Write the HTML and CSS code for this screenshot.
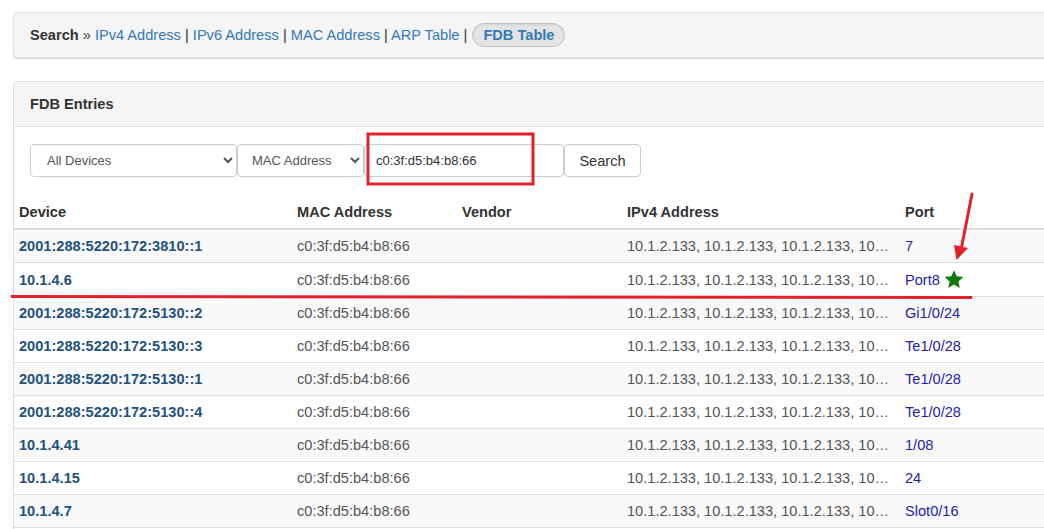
FILE: index.html
```html
<!DOCTYPE html>
<html>
<head>
<meta charset="utf-8">
<link rel="stylesheet" href="styles.css">
</head>
<body>
<div class="page">
  <div class="well">
    <b class="crumb-title">Search</b> &raquo; <a href="#">IPv4 Address</a> | <a href="#">IPv6 Address</a> | <a href="#">MAC Address</a> | <a href="#">ARP Table</a> | <a href="#" class="pill">FDB Table</a>
  </div>

  <div class="panel">
    <div class="panel-heading">FDB Entries</div>
    <div class="panel-body">
      <form class="search-form">
        <select class="ctl sel-device"><option>All Devices</option></select>
        <select class="ctl sel-type"><option>MAC Address</option></select>
        <input class="ctl inp" type="text" value="c0:3f:d5:b4:b8:66">
        <button type="button" class="btn">Search</button>
      </form>
    </div>
    <table class="fdb">
      <colgroup>
        <col class="c-dev"><col class="c-mac"><col class="c-ven"><col class="c-ip"><col class="c-port">
      </colgroup>
      <thead>
        <tr><th>Device</th><th>MAC Address</th><th>Vendor</th><th>IPv4 Address</th><th>Port</th></tr>
      </thead>
      <tbody>
        <tr><td><a class="dev" href="#">2001:288:5220:172:3810::1</a></td><td>c0:3f:d5:b4:b8:66</td><td></td><td class="ip">10.1.2.133, 10.1.2.133, 10.1.2.133, 10.1.2.133</td><td><a class="port" href="#">7</a></td></tr>
        <tr><td><a class="dev" href="#">10.1.4.6</a></td><td>c0:3f:d5:b4:b8:66</td><td></td><td class="ip">10.1.2.133, 10.1.2.133, 10.1.2.133, 10.1.2.133</td><td><a class="port" href="#">Port8</a> <svg class="star" width="20" height="20" viewBox="0 0 20 20"><path d="M10 1.2 L12.7 7.28 L19.32 7.97 L14.37 12.42 L15.76 18.93 L10 15.6 L4.24 18.93 L5.63 12.42 L0.68 7.97 L7.3 7.28 Z" fill="#0b7a0b"/></svg></td></tr>
        <tr><td><a class="dev" href="#">2001:288:5220:172:5130::2</a></td><td>c0:3f:d5:b4:b8:66</td><td></td><td class="ip">10.1.2.133, 10.1.2.133, 10.1.2.133, 10.1.2.133</td><td><a class="port" href="#">Gi1/0/24</a></td></tr>
        <tr><td><a class="dev" href="#">2001:288:5220:172:5130::3</a></td><td>c0:3f:d5:b4:b8:66</td><td></td><td class="ip">10.1.2.133, 10.1.2.133, 10.1.2.133, 10.1.2.133</td><td><a class="port" href="#">Te1/0/28</a></td></tr>
        <tr><td><a class="dev" href="#">2001:288:5220:172:5130::1</a></td><td>c0:3f:d5:b4:b8:66</td><td></td><td class="ip">10.1.2.133, 10.1.2.133, 10.1.2.133, 10.1.2.133</td><td><a class="port" href="#">Te1/0/28</a></td></tr>
        <tr><td><a class="dev" href="#">2001:288:5220:172:5130::4</a></td><td>c0:3f:d5:b4:b8:66</td><td></td><td class="ip">10.1.2.133, 10.1.2.133, 10.1.2.133, 10.1.2.133</td><td><a class="port" href="#">Te1/0/28</a></td></tr>
        <tr><td><a class="dev" href="#">10.1.4.41</a></td><td>c0:3f:d5:b4:b8:66</td><td></td><td class="ip">10.1.2.133, 10.1.2.133, 10.1.2.133, 10.1.2.133</td><td><a class="port" href="#">1/08</a></td></tr>
        <tr><td><a class="dev" href="#">10.1.4.15</a></td><td>c0:3f:d5:b4:b8:66</td><td></td><td class="ip">10.1.2.133, 10.1.2.133, 10.1.2.133, 10.1.2.133</td><td><a class="port" href="#">24</a></td></tr>
        <tr><td><a class="dev" href="#">10.1.4.7</a></td><td>c0:3f:d5:b4:b8:66</td><td></td><td class="ip">10.1.2.133, 10.1.2.133, 10.1.2.133, 10.1.2.133</td><td><a class="port" href="#">Slot0/16</a></td></tr>
        <tr class="more"><td></td><td></td><td></td><td></td><td></td></tr>
      </tbody>
    </table>
  </div>
</div>

<svg class="annot" width="1044" height="529" viewBox="0 0 1044 529">
  <rect x="368" y="134" width="165" height="50" fill="none" stroke="#e3212b" stroke-width="3"/>
  <line x1="12" y1="296.5" x2="971" y2="297.5" stroke="#e3212b" stroke-width="3" stroke-linecap="round"/>
  <line x1="972" y1="194" x2="961" y2="250" stroke="#e3212b" stroke-width="3" stroke-linecap="round"/>
  <polygon points="956.5,260 954,245 968,248" fill="#e3212b"/>
</svg>
</body>
</html>
```

FILE: styles.css
```css
html, body {
  margin: 0;
  padding: 0;
  overflow: hidden;
  background: #fff;
}

body {
  font-family: "Liberation Sans", Arial, sans-serif;
  font-size: 14.6px;
  color: #333;
  position: relative;
  width: 1044px;
  height: 529px;
}

a {
  color: #337ab7;
  text-decoration: none;
}

.page {
  padding: 12px 0 0 13px;
  width: 1110px;
}

.well {
  background: #f5f5f5;
  border: 1px solid #e3e3e3;
  border-radius: 4px;
  box-shadow: 0 1px 1px rgba(0, 0, 0, 0.06), 0 1px 0 #e3e3e3;
  padding: 10px 16px;
  height: 24px;
  line-height: 24px;
  white-space: nowrap;
}

.crumb-title {
  font-weight: bold;
  color: #333;
}

.pill {
  display: inline-block;
  vertical-align: top;
  font-weight: bold;
  background: #e4e4e4;
  border: 1px solid #c4c4c4;
  border-radius: 12px;
  height: 22px;
  line-height: 22px;
  padding: 0 10px;
  margin-left: 1px;
  box-shadow: inset 0 1px 2px rgba(0, 0, 0, 0.08);
}

.panel {
  margin-top: 23px;
  border: 1px solid #ddd;
  border-radius: 4px;
  background: #fff;
}

.panel-heading {
  background: #f5f5f5;
  border-bottom: 1px solid #ddd;
  height: 44px;
  line-height: 44px;
  padding: 0 16px;
  font-weight: bold;
  border-radius: 4px 4px 0 0;
}

.panel-body {
  padding: 17px 16px 0 16px;
}

.search-form {
  display: flex;
  height: 33px;
}

.ctl {
  box-sizing: border-box;
  height: 33px;
  border: 1px solid #ccc;
  border-radius: 4px;
  background: #fff;
  font-family: "Liberation Sans", Arial, sans-serif;
  font-size: 13px;
  color: #555;
  margin: 0;
}

.sel-device {
  width: 207px;
  padding: 0 8px 0 12px;
}

.sel-type {
  width: 127px;
  padding: 0 8px 0 10px;
}

.inp {
  width: 200px;
  padding: 0 11px;
  color: #333;
}

.btn {
  box-sizing: border-box;
  height: 33px;
  width: 77px;
  border: 1px solid #ccc;
  border-radius: 4px;
  background: #fff;
  font-family: "Liberation Sans", Arial, sans-serif;
  font-size: 14.6px;
  color: #333;
  padding: 0;
  margin: 0;
}

.fdb {
  margin-top: 19px;
  width: 100%;
  border-collapse: collapse;
  table-layout: fixed;
}

.c-dev { width: 278px; }
.c-mac { width: 165px; }
.c-ven { width: 165px; }
.c-ip { width: 278px; }

.fdb th {
  text-align: left;
  font-weight: bold;
  color: #333;
  padding: 6px 5px;
  line-height: 20px;
  border-bottom: 2px solid #ddd;
}

.fdb td {
  padding: 6px 5px;
  line-height: 20px;
  height: 20px;
  border-top: 1px solid #ddd;
  color: #555;
  white-space: nowrap;
  overflow: hidden;
  text-overflow: ellipsis;
}

.fdb td.ip {
  padding-right: 9px;
}

.fdb tbody tr:nth-child(odd) td {
  background: #f9f9f9;
}

.dev {
  font-weight: bold;
  color: #23527c;
}

.port {
  color: #2222aa;
}

.star {
  vertical-align: -4px;
  margin-left: 0;
}

.annot {
  position: absolute;
  top: 0;
  left: 0;
  pointer-events: none;
}
```
